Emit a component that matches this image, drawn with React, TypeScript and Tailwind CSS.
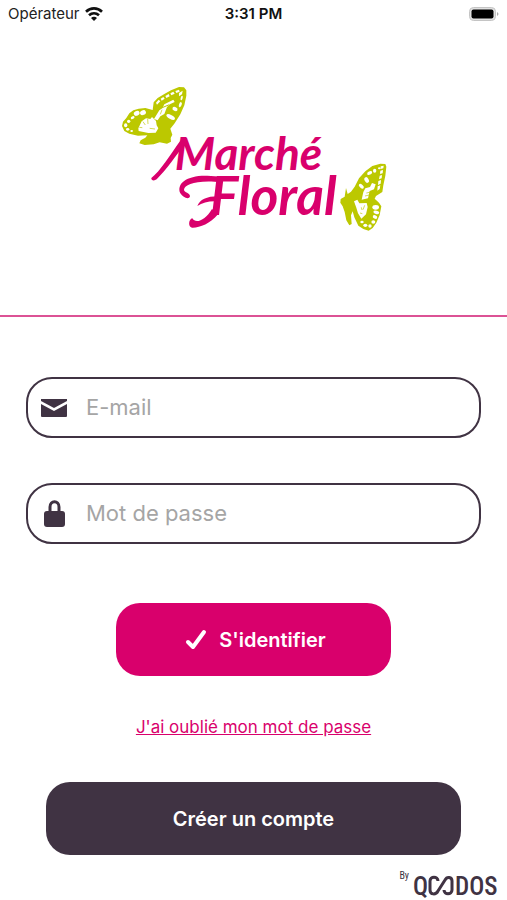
import { useState } from "react";
import type { FormEvent } from "react";

function StatusBar() {
  return (
    <div className="grid h-7 grid-cols-3 items-center px-2 text-[15px] text-[#222]">
      <div className="flex items-center gap-1">
        <span>Opérateur</span>
        <svg viewBox="0 0 54 42" className="h-3.5 w-5" fill="none" stroke="#111" strokeWidth="8">
          <path d="M3 14 C17 1 37 1 51 14" />
          <path d="M12 25 C21 17 33 17 42 25" />
          <path d="M18 33 C23 28 31 28 36 33 L27 42 Z" fill="#111" stroke="none" />
        </svg>
      </div>
      <div className="text-center font-semibold text-[#111]">3:31 PM</div>
      <svg viewBox="0 0 30 14" className="h-3.5 w-[30px] justify-self-end">
        <rect x="0.5" y="0.5" width="26" height="13" rx="4" fill="#e0e0e0" stroke="#c4c4c4" />
        <rect x="2.5" y="2.5" width="22" height="9" rx="2" fill="#000" />
        <path d="M28 5 C30 6 30 8 28 9 Z" fill="#aaa" />
      </svg>
    </div>
  );
}

function LeftButterfly() {
  return (
    <g>
      <path
        fill="#bcc800"
        d="M128 105 L131 82 L143 69 L163 57 L183 46 L207 36 L222 37 L229 46 L229 62 L223 91 L211 118 L194 145 L181 161 L187 179 L182 189 L183 200 L171 206 L149 202 L131 208 L104 210 L88 205 L92 196 L106 188 L112 181 L84 182 L58 176 L43 168 L36 153 L39 140 L49 129 L58 115 L70 106 L86 101 L106 99 Z"
      />
      <g fill="#fff">
        <ellipse cx="47" cy="151" rx="5" ry="6" />
        <ellipse cx="56" cy="139" rx="5" ry="5" />
        <ellipse cx="53" cy="163" rx="5" ry="4" />
        <ellipse cx="65" cy="168" rx="4" ry="3" />
        <ellipse cx="68" cy="128" rx="6" ry="4" transform="rotate(-30 68 128)" />
        <ellipse cx="80" cy="115" rx="9" ry="7" transform="rotate(-25 80 115)" />
        <ellipse cx="99" cy="113" rx="9" ry="7" transform="rotate(-25 99 113)" />
        <path d="M85 160 L95 139 L108 130 L121 132 L126 126 L138 138 L140 151 L145 160 L137 173 L115 174 L86 168 Z" />
        <path d="M132 132 L148 106 L159 96 L163 88 L190 74 L194 81 L181 87 L171 96 L163 117 L151 124 L143 136 Z" />
        <ellipse cx="182" cy="126" rx="14" ry="6" transform="rotate(28 182 126)" />
        <ellipse cx="195" cy="102" rx="8" ry="6" transform="rotate(25 195 102)" />
        <ellipse cx="211" cy="89" rx="4" ry="8" transform="rotate(20 211 89)" />
        <ellipse cx="215" cy="69" rx="3" ry="7" transform="rotate(15 215 69)" />
        <path d="M138 83 L146 74 L151 79 L141 89 Z M152 71 L160 66 L164 71 L155 77 Z M166 63 L176 57 L179 64 L169 69 Z M181 55 L190 50 L194 56 L184 61 Z M196 48 L207 44 L209 50 L199 54 Z" />
        <path d="M207 54 L218 47 L216 58 L207 64 Z" />
      </g>
      <g fill="none" stroke="#bcc800" strokeWidth="2">
        <path d="M99 140 L106 150 M113 132 L114 147 M88 157 L97 158 M119 160 L135 162 M156 104 L151 118" />
        <path d="M142 107 L159 97 L178 89 M193 62 L188 75" strokeWidth="3" />
      </g>
    </g>
  );
}

function RightButterfly() {
  return (
    <g transform="translate(675 240)">
      <path
        fill="#bcc800"
        d="M59 95 L72 70 L91 49 L112 33 L136 26 L151 27 L154 35 L151 62 L145 91 L142 111 L123 123 L119 131 L132 143 L139 154 L134 180 L124 203 L113 219 L101 227 L85 222 L70 212 L58 187 L53 169 L48 181 L50 207 L43 211 L34 196 L29 171 L23 154 L16 143 L17 132 L29 125 L33 99 L38 117 L48 110 Z"
      />
      <g fill="#fff">
        <path d="M85 111 L91 100 L105 96 L111 84 L122 88 L117 103 L104 108 L99 130 L80 134 Z" />
        <path d="M57 139 L67 134 L73 145 L95 144 L98 156 L93 178 L79 191 L69 175 L64 158 Z" />
        <ellipse cx="79" cy="94" rx="9" ry="5" transform="rotate(42 79 94)" />
        <ellipse cx="95" cy="75" rx="9" ry="6" transform="rotate(60 95 75)" />
        <ellipse cx="104" cy="54" rx="8" ry="5" transform="rotate(-25 104 54)" />
        <ellipse cx="119" cy="47" rx="5" ry="6" />
        <ellipse cx="133" cy="40" rx="4" ry="3" />
        <path d="M137 34 L146 32 L145 40 L137 42 Z M136 47 L144 45 L143 55 L135 57 Z M134 62 L141 60 L140 70 L132 73 Z M130 78 L138 75 L137 86 L129 90 Z M128 94 L136 91 L134 102 L127 107 Z" />
        <ellipse cx="122" cy="157" rx="10" ry="7" />
        <ellipse cx="124" cy="172" rx="9" ry="5" transform="rotate(15 124 172)" />
        <ellipse cx="120" cy="186" rx="7" ry="5" transform="rotate(25 120 186)" />
        <ellipse cx="115" cy="201" rx="6" ry="5" />
        <ellipse cx="105" cy="213" rx="5" ry="5" />
        <ellipse cx="91" cy="211" rx="6" ry="5" />
        <ellipse cx="81" cy="201" rx="5" ry="4" />
      </g>
      <g fill="none" stroke="#bcc800" strokeWidth="2">
        <path d="M94 114 L108 111 M90 123 L103 120 M79 157 L81 165 M89 151 L84 164 M75 174 L82 176" />
      </g>
    </g>
  );
}

function MarcheFloralLogo() {
  return (
    <svg viewBox="24 30 813 450" className="h-[150px] w-[271px]" role="img" aria-label="Marché Floral">
      <LeftButterfly />
      <g fill="#d9006c" className="font-['Lato',sans-serif] font-bold italic">
        <text x="194" y="285" fontSize="138">Marché</text>
        <text x="300" y="419" fontSize="160">Floral</text>
      </g>
      {/* flourishes around the two capitals */}
      <g fill="#d9006c">
        <path d="M124 309 C150 290 180 240 212 196 L226 204 C200 240 168 285 140 313 C132 319 123 316 124 309 Z" />
        <path d="M334 322 C260 314 224 329 222 344 C222 352 241 354 240 364 C238 374 220 370 211 355 C198 325 232 300 292 302 L336 305 Z" />
        <path d="M262 393 C270 374 288 364 326 364 L324 379 C298 377 278 383 262 393 Z" />
        <path d="M306 402 L324 418 C300 447 268 459 246 458 C233 456 236 432 247 430 C257 448 286 436 306 402 Z" />
      </g>
      <RightButterfly />
    </svg>
  );
}

function QoodosLogo() {
  return (
    <div className="flex items-start justify-end gap-1 pr-2.5 text-[#403343]">
      <span className="font-['Liberation_Sans_Narrow','Roboto_Condensed',Roboto,sans-serif] text-[10px] leading-3">By</span>
      <svg viewBox="0 0 84 30" className="h-[30px] w-[84px]" role="img" aria-label="Qoodos">
        <g fill="#403343" className="font-['Liberation_Sans_Narrow','Roboto_Condensed',Roboto,sans-serif] font-medium" fontSize="25">
          <text x="0" y="25">Q</text>
          <text x="42" y="25">DOS</text>
        </g>
        <path
          d="M25 11 C25 6 17 6 17 11 V20 C17 25 23 25 25 21 L32 10 C34 6 39 7 39 11 V20 C39 25 31 25 31 20"
          fill="none"
          stroke="#403343"
          strokeWidth="3"
        />
      </svg>
    </div>
  );
}

export default function App() {
  const [email, setEmail] = useState("");
  const [password, setPassword] = useState("");

  function handleSubmit(e: FormEvent) {
    e.preventDefault();
  }

  return (
    <div className="flex min-h-screen flex-col bg-white font-['Inter',sans-serif]">
      <StatusBar />
      <header className="flex justify-center border-b-2 border-[#dc5295] pt-[57px] pb-20">
        <MarcheFloralLogo />
      </header>

      <form className="flex flex-col px-[26px] pt-[60px]" onSubmit={handleSubmit}>
        <label className="flex h-[61px] items-center gap-[18px] rounded-[26px] border-2 border-[#403343] px-3">
          <svg viewBox="0 0 28 20" className="h-5 w-7 shrink-0" fill="#403343" aria-hidden="true">
            <path d="M1 1 H27 V3 L14 10 L1 3 Z" />
            <path d="M1 6 L14 13 L27 6 V18 Q27 19 26 19 H2 Q1 19 1 18 Z" />
          </svg>
          <input
            type="email"
            aria-label="E-mail"
            className="min-w-0 flex-1 bg-transparent text-[22px] text-[#403343] outline-none placeholder:text-[#a5a5a5]"
            placeholder="E-mail"
            value={email}
            onChange={e => setEmail(e.target.value)}
          />
        </label>
        <label className="mt-[45px] flex h-[61px] items-center gap-[18px] rounded-[26px] border-2 border-[#403343] px-3">
          <svg viewBox="0 0 28 28" className="size-7 shrink-0" fill="#403343" aria-hidden="true">
            <rect x="4" y="11" width="21" height="16" rx="3" />
            <path d="M10 13 V7 C10 0 19 0 19 7 V13" fill="none" stroke="#403343" strokeWidth="3" />
          </svg>
          <input
            type="password"
            aria-label="Mot de passe"
            className="min-w-0 flex-1 bg-transparent text-[22px] text-[#403343] outline-none placeholder:text-[#a5a5a5]"
            placeholder="Mot de passe"
            value={password}
            onChange={e => setPassword(e.target.value)}
          />
        </label>
        <button
          type="submit"
          className="mx-[90px] mt-[59px] flex h-[73px] items-center justify-center gap-3 rounded-3xl bg-[#d9006c] pl-1 text-xl font-semibold text-white"
        >
          <svg viewBox="0 0 22 22" className="size-[22px]" fill="none" stroke="#fff" strokeWidth="4" strokeLinecap="round" aria-hidden="true">
            <path d="M3 13 L8 18 L19 3" strokeLinejoin="round" />
          </svg>
          S'identifier
        </button>
      </form>

      <a href="#" className="mx-auto mt-[39px] text-[17px] leading-6 text-[#d9006c] underline">
        J'ai oublié mon mot de passe
      </a>
      <button
        type="button"
        className="mx-[46px] mt-[43px] h-[73px] rounded-3xl bg-[#403343] text-xl font-semibold text-white"
      >
        Créer un compte
      </button>
      <footer className="mt-auto pt-3">
        <QoodosLogo />
      </footer>
    </div>
  );
}
